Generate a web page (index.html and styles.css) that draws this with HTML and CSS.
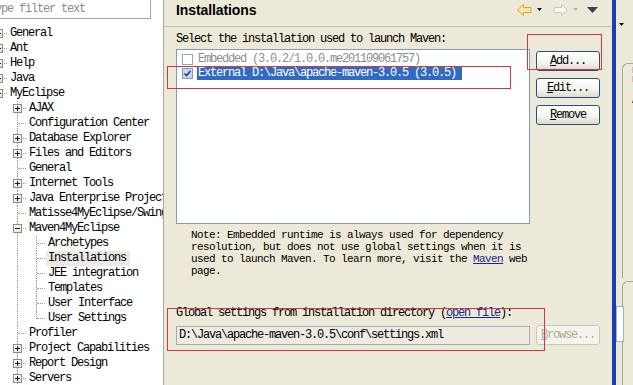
FILE: index.html
```html
<!DOCTYPE html>
<html lang="en">
<head>
  <meta charset="UTF-8" />
  <title>Preferences - Installations</title>
  <link rel="stylesheet" href="styles.css">
</head>
<body>

<!-- Preference tree -->
<aside class="tree">
  <div class="filter">type filter text</div>
  <div class="nodes">
    <div class="node"><span class="g t"><i class="box plus"></i></span><span class="lbl">General</span></div>
    <div class="node"><span class="g t"><i class="box plus"></i></span><span class="lbl">Ant</span></div>
    <div class="node"><span class="g t"><i class="box plus"></i></span><span class="lbl">Help</span></div>
    <div class="node"><span class="g t"><i class="box plus"></i></span><span class="lbl">Java</span></div>
    <div class="node"><span class="g t"><i class="box minus"></i></span><span class="lbl">MyEclipse</span></div>
    <div class="node"><span class="g v"></span><span class="g t"><i class="box plus"></i></span><span class="lbl">AJAX</span></div>
    <div class="node"><span class="g v"></span><span class="g t"></span><span class="lbl">Configuration Center</span></div>
    <div class="node"><span class="g v"></span><span class="g t"><i class="box plus"></i></span><span class="lbl">Database Explorer</span></div>
    <div class="node"><span class="g v"></span><span class="g t"><i class="box plus"></i></span><span class="lbl">Files and Editors</span></div>
    <div class="node"><span class="g v"></span><span class="g t"></span><span class="lbl">General</span></div>
    <div class="node"><span class="g v"></span><span class="g t"><i class="box plus"></i></span><span class="lbl">Internet Tools</span></div>
    <div class="node"><span class="g v"></span><span class="g t"><i class="box plus"></i></span><span class="lbl">Java Enterprise Project</span></div>
    <div class="node"><span class="g v"></span><span class="g t"></span><span class="lbl">Matisse4MyEclipse/Swing</span></div>
    <div class="node"><span class="g v"></span><span class="g t"><i class="box minus"></i></span><span class="lbl">Maven4MyEclipse</span></div>
    <div class="node"><span class="g v"></span><span class="g v"></span><span class="g t"></span><span class="lbl">Archetypes</span></div>
    <div class="node"><span class="g v"></span><span class="g v"></span><span class="g t"></span><span class="lbl selected">Installations</span></div>
    <div class="node"><span class="g v"></span><span class="g v"></span><span class="g t"></span><span class="lbl">JEE integration</span></div>
    <div class="node"><span class="g v"></span><span class="g v"></span><span class="g t"></span><span class="lbl">Templates</span></div>
    <div class="node"><span class="g v"></span><span class="g v"></span><span class="g t"></span><span class="lbl">User Interface</span></div>
    <div class="node"><span class="g v"></span><span class="g v"></span><span class="g l"></span><span class="lbl">User Settings</span></div>
    <div class="node"><span class="g v"></span><span class="g t"></span><span class="lbl">Profiler</span></div>
    <div class="node"><span class="g v"></span><span class="g t"><i class="box plus"></i></span><span class="lbl">Project Capabilities</span></div>
    <div class="node"><span class="g v"></span><span class="g t"><i class="box plus"></i></span><span class="lbl">Report Design</span></div>
    <div class="node"><span class="g v"></span><span class="g t"><i class="box plus"></i></span><span class="lbl">Servers</span></div>
  </div>
</aside>

<!-- Installations page -->
<main class="pane">
  <header class="pane-head">
    <h1>Installations</h1>
    <div class="nav">
      <svg class="arrow" width="15" height="12" viewBox="0 0 15 12">
        <polygon points="0.5,6 6.5,0.5 6.5,3.5 14,3.5 14,8.5 6.5,8.5 6.5,11.5" fill="#fce9a4" stroke="#d9a33a"/>
      </svg>
      <svg class="drop" width="5" height="4" viewBox="0 0 5 4"><polygon points="0,0 5,0 2.5,3" fill="#111"/></svg>
      <svg class="arrow fwd" width="15" height="12" viewBox="0 0 15 12">
        <polygon points="14.5,6 8.5,0.5 8.5,3.5 1,3.5 1,8.5 8.5,8.5 8.5,11.5" fill="#f6f6f3" stroke="#c9c9c4"/>
      </svg>
      <svg class="drop" width="5" height="4" viewBox="0 0 5 4"><polygon points="0,0 5,0 2.5,3" fill="#b8b8b8"/></svg>
      <svg class="menu" width="11" height="6" viewBox="0 0 11 6"><polygon points="0,0 11,0 5.5,6" fill="#3d3d5c"/></svg>
    </div>
  </header>

  <div class="pane-body">
    <p class="caption">Select the installation used to launch Maven:</p>

    <div class="install-row">
      <div class="listbox">
        <div class="item off">
          <span class="cb"></span>
          <span class="txt">Embedded (3.0.2/1.0.0.me201109061757)</span>
        </div>
        <div class="item">
          <span class="cb on">
            <svg width="9" height="9" viewBox="0 0 9 9"><path d="M1.5 4.5 L3.5 6.5 L7.5 2" fill="none" stroke="#2a3d6e" stroke-width="1.6"/></svg>
          </span>
          <span class="txt sel">External D:\Java\apache-maven-3.0.5 (3.0.5)</span>
        </div>
      </div>
      <div class="btns">
        <button class="btn"><u>A</u>dd...</button>
        <button class="btn"><u>E</u>dit...</button>
        <button class="btn"><u>R</u>emove</button>
      </div>
    </div>

    <p class="note">Note: Embedded runtime is always used for dependency<br>resolution, but does not use global settings when it is<br>used to launch Maven. To learn more, visit the <a href="#">Maven</a> web<br>page.</p>

    <p class="caption global">Global settings from installation directory (<a href="#">open file</a>):</p>
    <div class="field-row">
      <div class="field">D:\Java\apache-maven-3.0.5\conf\settings.xml</div>
      <button class="btn" disabled><u>B</u>rowse...</button>
    </div>
  </div>

  <!-- red annotation marks -->
  <div class="mark mark-row"></div>
  <div class="mark mark-add"></div>
  <div class="mark mark-global"></div>
</main>

<!-- neighbouring view, cut off at the window edge -->
<div class="divider"></div>
<aside class="side">
  <svg class="side-drop" width="5" height="3" viewBox="0 0 5 3"><polygon points="0,0 5,0 2.5,3" fill="#111"/></svg>
  <div class="side-box top">
    <div class="side-tab">D<br>D</div>
    <div class="side-a">A</div>
  </div>
  <div class="side-box bottom">
    <div class="side-scroll"></div>
  </div>
</aside>

</body>
</html>
```

FILE: styles.css
```css
body {
  margin: 0;
  width: 633px;
  height: 385px;
  overflow: hidden;
  display: flex;
  background: #ece9d8;
  font-family: 'Liberation Mono', monospace;
  font-size: 12px;
  letter-spacing: -1.2px;
  color: #000;
}

/* Tree */
.tree {
  width: 163px;
  flex: none;
  background: #fff;
  border-right: 1px solid #aca899;
  overflow: hidden;
}

.filter {
  width: 161px;
  height: 18px;
  margin: -1px 0 0 -15px;
  padding-left: 3px;
  border: 1px solid #a5a5a5;
  line-height: 18px;
  color: #8c8c8c;
  white-space: nowrap;
}

.nodes {
  margin: 7px 0 0 -11px;
}

.node {
  display: flex;
  height: 15px;
  line-height: 15px;
  white-space: nowrap;
}

.g {
  width: 19px;
  height: 15px;
  flex: none;
  position: relative;
}

.g.v::before,
.g.t::before,
.g.l::before {
  content: "";
  position: absolute;
  left: 9px;
  top: 0;
  bottom: 0;
  border-left: 1px dotted #9a9a9a;
}

.g.l::before {
  bottom: 7px;
}

.g.t::after,
.g.l::after {
  content: "";
  position: absolute;
  left: 10px;
  width: 8px;
  top: 7px;
  border-top: 1px dotted #9a9a9a;
}

.box {
  position: absolute;
  left: 5px;
  top: 3px;
  width: 7px;
  height: 7px;
  border: 1px solid #8c8c8c;
  background: linear-gradient(135deg, #fff, #e4e2d8);
  z-index: 1;
}

.box::before {
  content: "";
  position: absolute;
  left: 1px;
  top: 3px;
  width: 5px;
  height: 1px;
  background: #1a1a1a;
}

.box.plus::after {
  content: "";
  position: absolute;
  left: 3px;
  top: 1px;
  width: 1px;
  height: 5px;
  background: #1a1a1a;
}

.lbl {
  padding: 0 2px;
}

.lbl.selected {
  background: #ebeae4;
  padding-right: 4px;
}

/* Main page */
.pane {
  width: 447px;
  flex: none;
  position: relative;
}

.pane-head {
  height: 26px;
  border-bottom: 1px solid #c4c1b4;
  display: flex;
  justify-content: space-between;
  align-items: flex-start;
  padding: 0 13px 0 12px;
}

.pane-head h1 {
  margin: 1px 0 0;
  font-family: 'Liberation Sans', sans-serif;
  font-size: 14px;
  line-height: 18px;
  letter-spacing: -0.1px;
  font-weight: bold;
}

.nav {
  display: flex;
  align-items: center;
  margin-top: 4px;
  height: 12px;
}

.nav .drop {
  margin-left: 5px;
}

.nav .fwd {
  margin-left: 11px;
}

.nav .menu {
  margin-left: 9px;
}

.pane-body {
  padding: 6px 0 0 12px;
}

.caption {
  margin: 0;
  line-height: 12px;
  white-space: nowrap;
}

a {
  color: #1a2a8c;
  text-decoration: underline;
}

.install-row {
  display: flex;
  gap: 6px;
  margin-top: 4px;
}

.listbox {
  width: 352px;
  height: 171px;
  border: 1px solid #7f9db9;
  background: #fff;
  padding-top: 2px;
  box-sizing: content-box;
}

.item {
  display: flex;
  align-items: center;
  height: 14px;
  white-space: nowrap;
}

.cb {
  width: 9px;
  height: 9px;
  margin: 0 4px 0 5px;
  border: 1px solid #9ea3a8;
  background: #fff;
  display: flex;
}

.cb.on {
  border-color: #7f9db9;
  background: #c9d8ef;
}

.txt {
  line-height: 13px;
  padding: 0 1px;
}

.item.off .txt {
  color: #8d8d8d;
}

.txt.sel {
  background: #316ac5;
  color: #fff;
  padding-right: 6px;
}

.btns {
  display: flex;
  flex-direction: column;
  gap: 7px;
  margin-top: 2px;
}

.btn {
  width: 64px;
  height: 20px;
  padding: 0;
  border: 1px solid #2b4f7e;
  border-radius: 3px;
  background: linear-gradient(#ffffff, #f3f3ee 60%, #dcdad0);
  font: inherit;
  letter-spacing: -1.2px;
  color: #000;
}

.btn:disabled {
  border-color: #cbc8bb;
  background: #f4f3ee;
  color: #aca899;
}

.note {
  margin: 5px 0 0 15px;
  font-size: 11px;
  letter-spacing: -0.6px;
  line-height: 12px;
  white-space: nowrap;
}

.caption.global {
  margin-top: 30px;
}

.field-row {
  display: flex;
  gap: 6px;
  align-items: center;
  margin-top: 6px;
}

.field {
  width: 350px;
  height: 17px;
  border: 1px solid #a4acb4;
  background: #eeece2;
  padding-left: 2px;
  line-height: 17px;
  white-space: nowrap;
}

/* Red annotation marks drawn over the page */
.mark {
  position: absolute;
  border: 1px solid #d23a3a;
}

.mark-row {
  left: 3px;
  top: 66px;
  width: 342px;
  height: 21px;
}

.mark-add {
  left: 363px;
  top: 34px;
  width: 73px;
  height: 34px;
}

.mark-global {
  left: 3px;
  top: 308px;
  width: 376px;
  height: 41px;
}

/* Neighbouring view */
.divider {
  width: 4px;
  flex: none;
  background: #1c3fae;
  border-left: 1px solid #e8e6dc;
}

.side {
  flex: 1;
  display: flex;
  flex-direction: column;
  overflow: hidden;
}

.side-drop {
  margin: 23px 0 0 3px;
}

.side-box {
  margin-left: 6px;
  border-left: 1px solid #a9a695;
  border-top: 1px solid #a9a695;
  border-top-left-radius: 6px;
  font-family: 'Liberation Sans', sans-serif;
  letter-spacing: 0;
}

.side-box.top {
  margin-top: 37px;
  height: 214px;
}

.side-box.bottom {
  margin-top: 3px;
  flex: 1;
}

.side-tab {
  margin: 2px 0 0 9px;
  font-size: 9px;
  line-height: 9px;
  color: #2a55b0;
}

.side-a {
  margin: 8px 0 0 9px;
  font-size: 12px;
}

.side-scroll {
  width: 6px;
  height: 34px;
  margin: 24px 0 0 -7px;
  background: #fff;
  border: 1px solid #9db0d8;
}
```
